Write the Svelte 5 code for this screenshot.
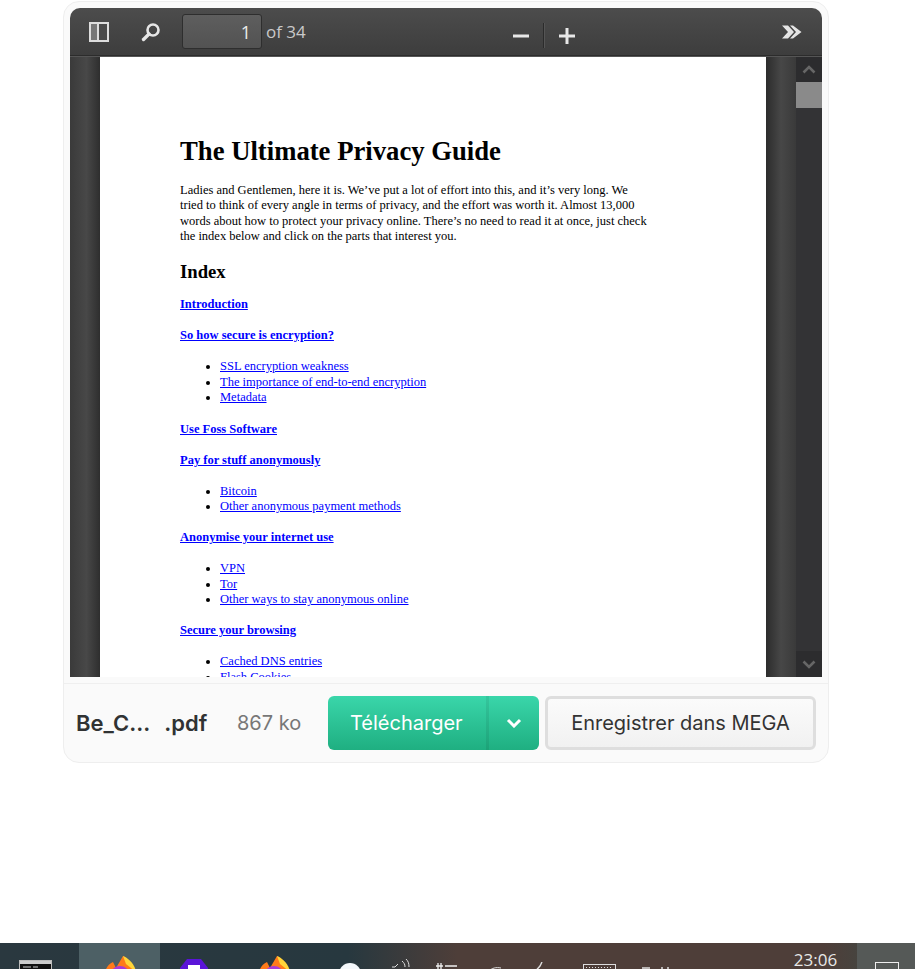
<script>
  const sections = [
    { head: 'Introduction' },
    { head: 'So how secure is encryption?', items: ['SSL encryption weakness', 'The importance of end-to-end encryption', 'Metadata'] },
    { head: 'Use Foss Software' },
    { head: 'Pay for stuff anonymously', items: ['Bitcoin', 'Other anonymous payment methods'] },
    { head: 'Anonymise your internet use', items: ['VPN', 'Tor', 'Other ways to stay anonymous online'] },
    { head: 'Secure your browsing', items: ['Cached DNS entries', 'Flash Cookies'] }
  ];
</script>

<div class="screen">
  <main class="card">
    <section class="viewer">
      <header class="toolbar">
        <div class="tb-left">
          <button class="icon-btn" aria-label="Sidebar">
            <svg width="22" height="22" viewBox="0 0 22 22"><rect x="1" y="1" width="20" height="20" fill="#ddd"/><rect x="3" y="3" width="6" height="16" fill="#777"/><rect x="11" y="3" width="8" height="16" fill="#4a4a4a"/></svg>
          </button>
          <button class="icon-btn" aria-label="Find">
            <svg width="22" height="22" viewBox="0 0 22 22"><circle cx="13" cy="9" r="5.5" fill="none" stroke="#e6e6e6" stroke-width="2.6"/><path d="M9 13 L3.5 18.5" stroke="#e6e6e6" stroke-width="3.4" stroke-linecap="round"/></svg>
          </button>
          <div class="page-input">1</div>
          <span class="of">of 34</span>
        </div>
        <div class="tb-mid">
          <svg width="16" height="16" viewBox="0 0 16 16"><rect y="6.5" width="16" height="3" fill="#e8e8e8"/></svg>
          <span class="sep"></span>
          <svg width="16" height="16" viewBox="0 0 16 16"><path d="M0 6.5h6.5V0h3v6.5H16v3H9.500V16h-3V9.500H0z" fill="#e8e8e8"/></svg>
        </div>
        <svg class="more" width="22" height="16" viewBox="0 0 22 16"><path d="M1 1.500 L7 1.500 L13 8 L7 14.500 L1 14.500 L7 8Z M9 1.500 L12 1.500 L20.500 8 L12 14.500 L9 14.500 L15 8Z" fill="#e4e4e4"/></svg>
      </header>
      <div class="body">
        <div class="gutter"></div>
        <article class="page">
          <h1>The Ultimate Privacy Guide</h1>
          <p>Ladies and Gentlemen, here it is. We’ve put a lot of effort into this, and it’s very long. We<br>tried to think of every angle in terms of privacy, and the effort was worth it. Almost 13,000<br>words about how to protect your privacy online. There’s no need to read it at once, just check<br>the index below and click on the parts that interest you.</p>
          <h2>Index</h2>
          {#each sections as s}
            <h3><a href="#top">{s.head}</a></h3>
            {#if s.items}
              <ul>
                {#each s.items as item}<li><a href="#top">{item}</a></li>{/each}
              </ul>
            {/if}
          {/each}
        </article>
        <div class="gutter right"></div>
        <div class="scrollbar">
          <div class="sb-btn"><svg width="14" height="9" viewBox="0 0 14 9"><path d="M1.500 7.500 L7 2 L12.500 7.500" fill="none" stroke="#666" stroke-width="2.600"/></svg></div>
          <div class="thumb"></div>
          <div class="track"></div>
          <div class="sb-btn"><svg width="14" height="9" viewBox="0 0 14 9"><path d="M1.500 1.500 L7 7 L12.500 1.500" fill="none" stroke="#666" stroke-width="2.600"/></svg></div>
        </div>
      </div>
    </section>
    <footer class="footer">
      <div class="name"><span>Be_C...</span><span>.pdf</span></div>
      <div class="size">867 ko</div>
      <div class="dl">
        <span class="dl-label">Télécharger</span>
        <span class="dl-arrow"><svg width="16" height="10" viewBox="0 0 16 10"><path d="M2 2 L8 8 L14 2" fill="none" stroke="#fff" stroke-width="3"/></svg></span>
      </div>
      <div class="save">Enregistrer dans MEGA</div>
    </footer>
  </main>

  <div class="taskbar">
    <div class="tile term">
      <svg width="33" height="24" viewBox="0 0 33 24"><rect x="0.500" y="0.500" width="32" height="23" fill="#111" stroke="#bbb"/><rect x="1" y="1" width="31" height="3" fill="#ccc"/><path d="M4 7h8M14 7h5" stroke="#ccc"/></svg>
    </div>
    <div class="tile fx active">
      <svg width="34" height="26" viewBox="0 0 34 26"><path d="M1 26C1 14 4 9 10 6L13 12L20 0C26 3 33 10 33 26Z" fill="#ff7a1a"/><path d="M20 0C25 2 32 8 33 16L23 8Z" fill="#ffd53a"/><ellipse cx="17" cy="18" rx="9" ry="8" fill="#a93bd6"/></svg>
    </div>
    <div class="tile proton">
      <svg width="30" height="24" viewBox="0 0 30 24"><path d="M8 1H22L29 10V24H1V10Z" fill="#5a14d8"/><rect x="9" y="7" width="12" height="17" fill="#fff"/><rect x="12" y="12" width="7" height="12" fill="#222048"/></svg>
    </div>
    <div class="tile fx two">
      <svg width="34" height="26" viewBox="0 0 34 26"><path d="M1 26C1 14 4 9 10 6L13 12L20 0C26 3 33 10 33 26Z" fill="#ff7a1a"/><path d="M20 0C25 2 32 8 33 16L23 8Z" fill="#ffd53a"/><ellipse cx="17" cy="18" rx="9" ry="8" fill="#a93bd6"/></svg>
    </div>
    <div class="tray">
      <svg class="t-circle" width="24" height="24" viewBox="0 0 24 24"><circle cx="12" cy="12" r="11" fill="#f4f8fb"/><path d="M4 8H20L12 15Z" fill="#5aa4e6"/></svg>
      <svg class="t-sound" width="20" height="14" viewBox="0 0 20 14"><path d="M1 9h3l3-3M11 3c2 2 3 3 3 6M15 1c2 2 3 4 3 8" fill="none" stroke="#ddd"/></svg>
      <svg class="t-net" width="22" height="14" viewBox="0 0 22 14"><path d="M3 1v12M6 1v12M1 4h7M10 4h12" fill="none" stroke="#eee" stroke-width="1.300"/></svg>
      <svg class="t-a" width="14" height="14" viewBox="0 0 14 14"><path d="M1 7C4 4 8 3 13 4" fill="none" stroke="#ddd"/></svg>
      <svg class="t-b" width="14" height="14" viewBox="0 0 14 14"><path d="M2 13L10 4L12 0" fill="none" stroke="#ddd" stroke-width="1.400"/></svg>
      <svg class="t-key" width="33" height="12" viewBox="0 0 33 12"><rect x="0.500" y="0.500" width="32" height="14" fill="none" stroke="#ddd"/><path d="M3 3.500h27" stroke="#ddd" stroke-dasharray="1 2"/></svg>
      <svg class="t-c" width="30" height="10" viewBox="0 0 30 10"><path d="M1 4h8M20 4h2M26 4h2" stroke="#ddd" stroke-width="1.400"/></svg>
    </div>
    <div class="clock">23:06</div>
    <div class="notify"><span class="box"></span></div>
  </div>
</div>

<style>
  :global(html), :global(body) { margin: 0; padding: 0; background: #fff; overflow: hidden; }
  .screen { width: 915px; height: 969px; display: flex; flex-direction: column; justify-content: space-between; overflow: hidden; font-family: Inter, "Liberation Sans", sans-serif; }
  .card { margin: 1px 0 0 63px; width: 766px; height: 762px; box-sizing: border-box; border: 1px solid #eeeeee; border-radius: 16px; background: #fafafa; display: flex; flex-direction: column; padding: 6px 6px 0; }
  .viewer { height: 669px; display: flex; flex-direction: column; border-radius: 10px 10px 0 0; overflow: hidden; flex: none; }
  .toolbar { height: 48px; flex: none; background: linear-gradient(#4c4c4c, #3d3d3d); border-bottom: 1px solid #2c2c2c; box-shadow: 0 1px 0 #555; box-sizing: border-box; display: flex; align-items: center; position: relative; z-index: 1; }
  .tb-left { display: flex; align-items: center; }
  .icon-btn { border: 0; background: none; padding: 0; width: 22px; height: 22px; margin-left: 18px; display: block; }
  .icon-btn + .icon-btn { margin-left: 30px; }
  .page-input { margin-left: 20px; width: 80px; height: 35px; box-sizing: border-box; background: linear-gradient(#5e5e5e, #525252); border: 1px solid #2e2e2e; border-radius: 3px; color: #ececec; font: 18px/34px "Open Sans", sans-serif; text-align: right; padding-right: 10px; }
  .of { margin-left: 4px; color: #c9c9c9; font: 17px "Open Sans", sans-serif; }
  .tb-mid { position: absolute; left: 443px; top: 15px; display: flex; align-items: center; gap: 14px; }
  .sep { width: 1px; height: 25px; background: #2b2b2b; box-shadow: 1px 0 0 #555; margin-right: 1px; }
  .more { margin-left: auto; margin-right: 19px; }
  .body { flex: 1; display: flex; min-height: 0; background: #3a3a3a; }
  .gutter { width: 30px; flex: none; background: linear-gradient(90deg, #3a3a3a, #484848 55%, #2e2e2e); }
  .gutter.right { background: linear-gradient(90deg, #2c2c2c, #474747 50%, #3a3a3a); }
  .page { width: 666px; flex: none; box-sizing: border-box; background: #fff; overflow: hidden; padding: 80px 0 0 80px; color: #000; font-family: "Liberation Serif", serif; font-size: 12.5px; line-height: 15.300px; }
  h1 { margin: 0; font-size: 26.700px; line-height: 31px; font-weight: 700; }
  p { margin: 16px 0 0; white-space: nowrap; }
  h2 { margin: 16px 0 0; font-size: 18.700px; line-height: 24px; font-weight: 700; }
  h3 { margin: 16px 0 0; font-size: 12.500px; line-height: 15.300px; font-weight: 700; }
  h2 + h3 { margin-top: 13px; }
  a { color: #0000ff; text-decoration: underline; }
  ul { margin: 15.500px 0 0; padding: 0 0 0 40px; }
  li { line-height: 15.400px; }
  .scrollbar { width: 26px; flex: none; background: #333335; display: flex; flex-direction: column; }
  .sb-btn { height: 26px; background: #2c2c2e; display: flex; align-items: center; justify-content: center; flex: none; }
  .thumb { height: 26px; background: #8a8a8a; flex: none; }
  .track { flex: 1; }
  .footer { margin: 6px -6px 0; flex: 1; border-top: 1px solid #efefef; display: flex; align-items: center; padding: 0 12px 0 12px; box-sizing: border-box; }
  .name { display: flex; gap: 14px; width: 137px; flex: none; font-weight: 600; font-size: 22px; color: #303233; white-space: nowrap; }
  .size { width: 91px; flex: none; font-size: 20px; color: #777; white-space: nowrap; margin-left: 24px; width: 91px; }
  .dl { width: 211px; height: 54px; flex: none; display: flex; border-radius: 6px; overflow: hidden; background: linear-gradient(#3ad6aa, #1faf81); color: #fff; }
  .dl-label { width: 158px; box-sizing: border-box; padding-left: 22px; font-size: 20px; line-height: 54px; white-space: nowrap; }
  .dl-arrow { width: 53px; box-sizing: border-box; border-left: 3px solid rgba(0,0,0,.07); display: flex; align-items: center; justify-content: center; }
  .save { width: 271px; height: 54px; margin-left: 6px; flex: none; box-sizing: border-box; border: 3px solid #dedede; border-radius: 6px; background: linear-gradient(#fbfbfb, #f1f1f1); color: #333; font-size: 20px; line-height: 48px; text-align: center; white-space: nowrap; }
  .taskbar { height: 26px; flex: none; display: flex; overflow: hidden; background: linear-gradient(90deg, #2a383f 0%, #27383f 38%, #4e3e39 50%, #4e3e39 90%, #46443f 94%); position: relative; }
  .tile { flex: none; display: flex; justify-content: center; box-sizing: border-box; }
  .term { width: 79px; padding: 17px 9px 0 0; }
  .active { width: 81px; background: #4d6065; padding-top: 13px; }
  .proton { width: 78px; padding: 15px 11px 0 0; }
  .two { width: 72px; padding: 13px 0 0 0; margin-left: 0; }
  .tray { flex: 1; position: relative; min-width: 0; display: flex; align-items: flex-start; }
  .tray svg { flex: none; }
  .t-circle { margin: 19px 0 0 28px; }
  .t-sound { margin: 15px 0 0 29px; }
  .t-net { margin: 19px 0 0 24px; }
  .t-a { margin: 21px 0 0 31px; }
  .t-b { margin: 19px 0 0 28px; }
  .t-key { margin: 21px 0 0 39px; }
  .t-c { margin: 21px 0 0 25px; }
  .clock { width: 78px; flex: none; color: #e8e8e8; font: 17px/34px "Open Sans", sans-serif; text-align: center; padding-right: 5px; box-sizing: border-box; margin-left: -1px; }
  .notify { width: 58px; flex: none; background: #555957; padding: 19px 0 0 18px; box-sizing: border-box; }
  .box { display: block; width: 24px; height: 24px; box-sizing: border-box; border: 1px solid #eee; }
</style>
